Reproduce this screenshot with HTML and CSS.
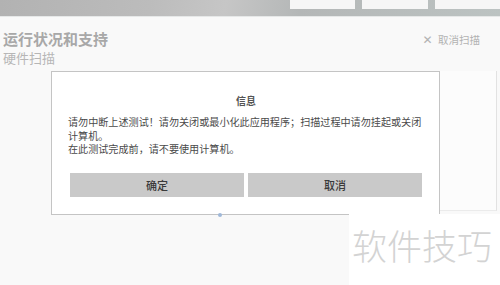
FILE: index.html
```html
<!DOCTYPE html>
<html lang="zh-CN">
<head>
    <meta charset="UTF-8">
    <title>运行状况和支持</title>
    <link rel="stylesheet" href="styles.css">
</head>
<body>
    <div class="top-band">
        <div class="tiles">
            <div class="tile"></div>
            <div class="tile"></div>
            <div class="tile"></div>
        </div>
    </div>

    <div class="page">
        <div class="header">
            <div class="titles">
                <h1 class="title">运行状况和支持</h1>
                <div class="subtitle">硬件扫描</div>
            </div>
            <div class="cancel-scan"><span class="x">✕</span> 取消扫描</div>
        </div>
        <div class="side-panel"></div>
    </div>

    <div class="dialog">
        <div class="dialog-title">信息</div>
        <p class="dialog-text">请勿中断上述测试！请勿关闭或最小化此应用程序；扫描过程中请勿挂起或关闭计算机。<br>在此测试完成前，请不要使用计算机。</p>
        <div class="dialog-buttons">
            <button class="btn">确定</button>
            <button class="btn">取消</button>
        </div>
    </div>
    <div class="dot"></div>

    <div class="watermark">软件技巧</div>
</body>
</html>
```

FILE: styles.css
```css
body {
    margin: 0;
    width: 500px;
    height: 285px;
    overflow: hidden;
    position: relative;
    background-color: #f9f9f9;
    font-family: "Noto Sans CJK SC", "Liberation Sans", sans-serif;
}

.top-band {
    height: 16px;
    background: linear-gradient(100deg, #b2b2b2 0%, #bcbcbc 30%, #c6c6c6 45%, #b4b7b7 60%, #bcc3c2 100%);
    border-bottom: 1px solid #e6e8e8;
}

.tiles {
    display: flex;
    justify-content: flex-end;
    gap: 7px;
    padding-left: 290px;
}

.tile {
    flex: 1;
    height: 9px;
    background-color: #f6f6f6;
}

.page {
    position: relative;
    height: 268px;
}

.header {
    display: flex;
    justify-content: space-between;
    padding: 12px 20px 0 3px;
}

.title {
    margin: 0;
    font-size: 15px;
    line-height: 20px;
    font-weight: bold;
    color: #a8a8a8;
}

.subtitle {
    font-size: 13px;
    line-height: 17px;
    color: #b6b6b6;
}

.cancel-scan {
    margin-top: 3px;
    font-size: 10.5px;
    color: #b2b2b2;
}

.cancel-scan .x {
    font-family: "DejaVu Sans", sans-serif;
    font-size: 12px;
    font-weight: bold;
    margin-right: 3px;
}

.side-panel {
    position: absolute;
    left: 440px;
    top: 54px;
    width: 56px;
    height: 139px;
    background-color: #fcfcfc;
    border-right: 1px solid #e2e2e2;
    border-bottom: 1px solid #ebebeb;
}

.dialog {
    position: absolute;
    left: 51px;
    top: 71px;
    width: 352px;
    height: 124px;
    padding: 0 17px 18px 18px;
    background-color: #fff;
    border: 1px solid #c4c4c4;
}

.dialog-title {
    margin-top: 22px;
    text-align: center;
    font-size: 10px;
    line-height: 14px;
    font-weight: bold;
    color: #555;
}

.dialog-text {
    margin: 7px 0 0 -2px;
    font-size: 10.1px;
    line-height: 13.5px;
    color: #4a4a4a;
}

.dialog-buttons {
    display: flex;
    gap: 4px;
    margin-top: 17px;
}

.btn {
    flex: 1;
    height: 24px;
    border: none;
    background-color: #c9c9c9;
    font-family: "Noto Sans CJK SC", sans-serif;
    font-size: 11px;
    font-weight: 500;
    color: #3a3a3a;
}

.dot {
    position: absolute;
    left: 218px;
    top: 213px;
    width: 4px;
    height: 4px;
    border-radius: 50%;
    background-color: #9fb8d8;
}

.watermark {
    position: absolute;
    left: 349px;
    top: 214px;
    width: 151px;
    height: 71px;
    background-color: #fff;
    padding-left: 3px;
    box-sizing: border-box;
    font-size: 35px;
    line-height: 62px;
    font-weight: 300;
    color: #d3d3d3;
}
```
